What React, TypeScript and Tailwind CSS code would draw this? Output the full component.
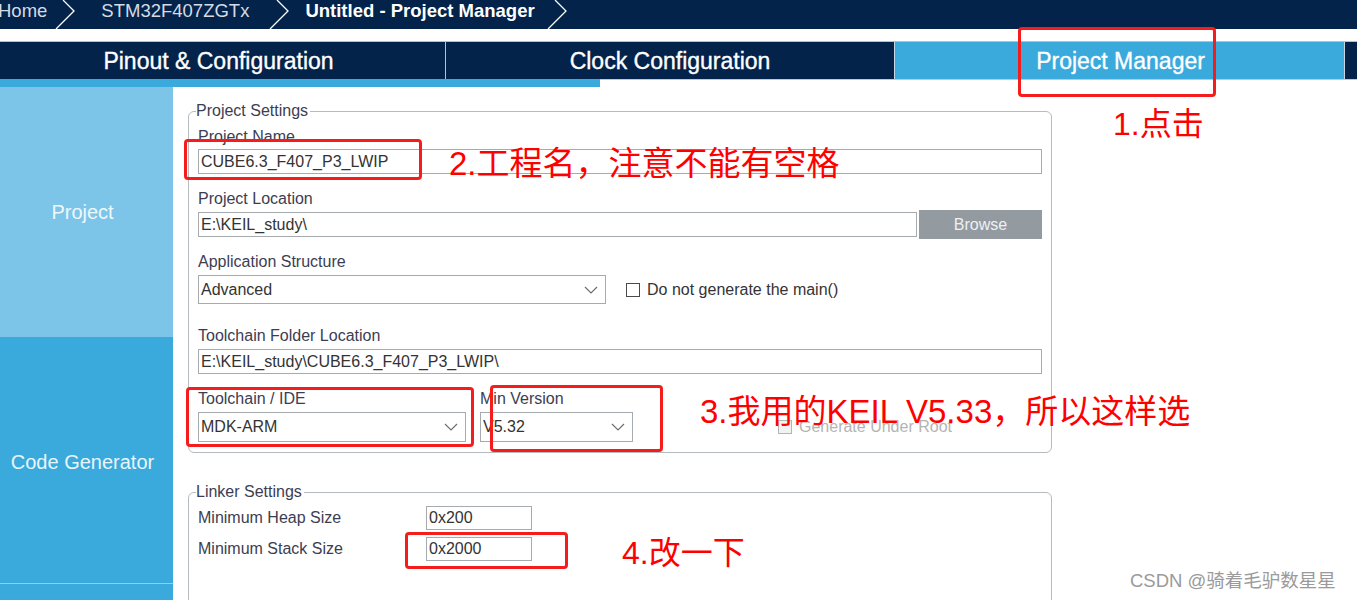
import React from "react";

const NAVY = "bg-[#03234b]";

function Crumb({ className }: { className: string }) {
  return (
    <svg className={className} width="22" height="29" viewBox="0 0 22 29" fill="none">
      <polyline points="8,0 19,11 1,29" stroke="#ffffff" strokeWidth="1.3" />
    </svg>
  );
}

function Chevron() {
  return (
    <svg width="14" height="8" viewBox="0 0 14 8" fill="none" className="shrink-0">
      <polyline points="1,1 7,7 13,1" stroke="#6b6f75" strokeWidth="1.2" />
    </svg>
  );
}

function TextBox({ value, className }: { value: string; className: string }) {
  return (
    <div className={`border border-[#a6abb0] bg-white pl-[2px] text-[16px] leading-[20px] text-[#333333] flex items-center ${className}`}>
      {value}
    </div>
  );
}

function Select({ value, className }: { value: string; className: string }) {
  return (
    <div className={`border border-[#a6abb0] bg-white pl-[2px] pr-[7px] text-[16px] text-[#333333] flex items-center justify-between ${className}`}>
      <span>{value}</span>
      <Chevron />
    </div>
  );
}

function Label({ text, className = "" }: { text: string; className?: string }) {
  return <div className={`text-[16px] leading-[18px] text-[#3d3d52] ${className}`}>{text}</div>;
}

export default function App() {
  return (
    <div className="relative w-[1357px] h-[600px] overflow-hidden bg-white font-['Liberation_Sans','Noto_Sans_CJK_SC',sans-serif]">
      {/* breadcrumb */}
      <div className={`${NAVY} h-[29px] flex items-center text-[18.5px] leading-none`}>
        <span className="-ml-[2px] pb-[7px] text-[#d6dbe3]">Home</span>
        <Crumb className="ml-[8px]" />
        <span className="ml-[24px] pb-[7px] text-[#d6dbe3]">STM32F407ZGTx</span>
        <Crumb className="ml-[20px]" />
        <span className="ml-[14px] pb-[7px] font-bold text-white">Untitled - Project Manager</span>
        <Crumb className="ml-[12px]" />
      </div>
      <div className="h-[12px]" />

      {/* main tabs */}
      <div className="flex h-[38px] border-t border-[#b9c0c8] text-[23px] text-white [-webkit-text-stroke:0.35px_white]">
        <div className={`${NAVY} w-[445px] flex items-center justify-center pr-[8px] pt-[2px]`}>Pinout &amp; Configuration</div>
        <div className="w-[1px] bg-[#b9c2cc]" />
        <div className={`${NAVY} w-[448px] flex items-center justify-center pt-[2px]`}>Clock Configuration</div>
        <div className="w-[1px] bg-[#c8d6e2]" />
        <div className="bg-[#3aa9dc] w-[449px] flex items-center justify-center pl-[2px] pt-[2px]">Project Manager</div>
        <div className="w-[1px] bg-[#c8d6e2]" />
        <div className={`${NAVY} flex-1`} />
      </div>
      <div className="flex h-[8px]">
        <div className="w-[600px] bg-[#3aa9dc]" />
        <div className="flex-1 border-t border-[#9fd3ee]" />
      </div>

      <div className="flex">
        {/* side tabs */}
        <div className="w-[173px] h-[513px] flex flex-col text-[20px]">
          <div className="h-[250px] bg-[#7dc5e8] flex items-center justify-center pr-[8px] text-[#eef7fc]">Project</div>
          <div className="h-[246px] bg-[#3aa9dc] flex items-center justify-center pr-[8px] pt-[4px] text-[#eaf5fb]">Code Generator</div>
          <div className="h-[1px] bg-[#8fd0ef]" />
          <div className="flex-1 bg-[#3aa9dc]" />
        </div>

        {/* content */}
        <div className="flex-1">
          <fieldset className="mt-[15px] ml-[15px] w-[864px] border border-[#b6bbc0] rounded-[6px] px-[9px] pb-[10px]">
            <legend className="-ml-[2px] pr-[2px] text-[16px] leading-[18px] text-[#3d3d52]">Project Settings</legend>

            <Label text="Project Name" className="mt-[8px]" />
            <TextBox value="CUBE6.3_F407_P3_LWIP" className="mt-[3px] h-[25px] w-full" />

            <Label text="Project Location" className="mt-[16px]" />
            <div className="mt-[2px] flex items-center h-[29px]">
              <TextBox value="E:\KEIL_study\" className="h-[25px] w-[719px]" />
              <div className="ml-[2px] w-[123px] h-[29px] bg-[#939aa0] text-[#eef1f4] text-[16px] flex items-center justify-center">
                Browse
              </div>
            </div>

            <Label text="Application Structure" className="mt-[14px]" />
            <div className="mt-[4px] flex items-center">
              <Select value="Advanced" className="h-[29px] w-[408px]" />
              <div className="ml-[20px] w-[14px] h-[14px] border border-[#4a4a4a] bg-white" />
              <span className="ml-[7px] text-[16px] text-[#333333]">Do not generate the main()</span>
            </div>

            <Label text="Toolchain Folder Location" className="mt-[23px]" />
            <TextBox value="E:\KEIL_study\CUBE6.3_F407_P3_LWIP\" className="mt-[4px] h-[25px] w-full" />

            <div className="mt-[16px] flex items-end">
              <div className="w-[268px]">
                <Label text="Toolchain / IDE" />
                <Select value="MDK-ARM" className="mt-[4px] h-[30px] w-full" />
              </div>
              <div className="ml-[14px] w-[153px]">
                <Label text="Min Version" />
                <Select value="V5.32" className="mt-[4px] h-[30px] w-full" />
              </div>
              <div className="ml-[145px] h-[30px] flex items-center">
                <div className="w-[14px] h-[14px] border border-[#b5b5b5] bg-[#f2f2f2]" />
                <span className="ml-[7px] text-[16px] text-[#b4b4b4]">Generate Under Root</span>
              </div>
            </div>
          </fieldset>

          <fieldset className="mt-[30px] ml-[15px] w-[864px] h-[140px] border border-[#b6bbc0] rounded-[6px] px-[9px]">
            <legend className="-ml-[2px] pr-[2px] text-[16px] leading-[18px] text-[#3d3d52]">Linker Settings</legend>
            <div className="mt-[5px] flex items-center">
              <Label text="Minimum Heap Size" className="w-[228px]" />
              <TextBox value="0x200" className="h-[24px] w-[106px]" />
            </div>
            <div className="mt-[7px] flex items-center">
              <Label text="Minimum Stack Size" className="w-[228px]" />
              <TextBox value="0x2000" className="h-[24px] w-[106px]" />
            </div>
          </fieldset>
        </div>
      </div>

      {/* annotations */}
      <div className="absolute left-[1018px] top-[27px] w-[198px] h-[70px] border-[3px] border-[#f51c1c] rounded-[4px]" />
      <div className="absolute left-[1113px] top-[108px] text-[32px] leading-none text-[#ff0000]">1.点击</div>

      <div className="absolute left-[184px] top-[139px] w-[238px] h-[41px] border-[3px] border-[#f51c1c] rounded-[4px]" />
      <div className="absolute left-[449px] top-[147px] text-[33px] leading-none text-[#ff0000]">2.工程名，注意不能有空格</div>

      <div className="absolute left-[186px] top-[387px] w-[288px] h-[60px] border-[3px] border-[#f51c1c] rounded-[4px]" />
      <div className="absolute left-[490px] top-[385px] w-[173px] h-[67px] border-[3px] border-[#f51c1c] rounded-[4px]" />
      <div className="absolute left-[700px] top-[395px] text-[33px] leading-none text-[#ff0000]">3.我用的KEIL V5.33，所以这样选</div>

      <div className="absolute left-[405px] top-[532px] w-[163px] h-[37px] border-[3px] border-[#f51c1c] rounded-[4px]" />
      <div className="absolute left-[622px] top-[537px] text-[32px] leading-none text-[#ff0000]">4.改一下</div>

      <div className="absolute left-[1130px] top-[572px] text-[18.5px] leading-none text-[#9a9a9a]">CSDN @骑着毛驴数星星</div>
    </div>
  );
}
